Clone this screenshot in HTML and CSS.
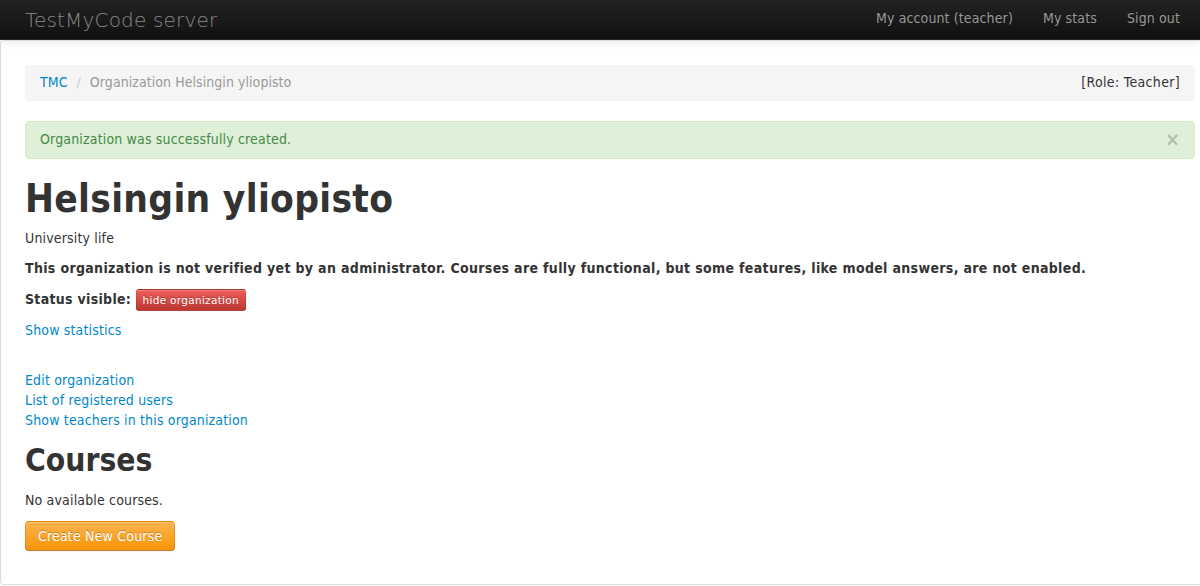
FILE: index.html
```html
<!DOCTYPE html>
<html>
<head>
<meta charset="utf-8">
<title>TestMyCode server</title>
<link rel="stylesheet" href="styles.css">
</head>
<body>
<header class="navbar">
  <a class="brand" href="#">TestMyCode server</a>
  <nav class="nav">
    <a href="#">My account (teacher)</a>
    <a href="#">My stats</a>
    <a href="#">Sign out</a>
  </nav>
</header>
<main class="wrapper">
  <div class="breadcrumb">
    <ul class="crumbs">
      <li><a href="#">TMC</a><span class="divider">/</span></li>
      <li class="active">Organization Helsingin yliopisto</li>
    </ul>
    <span class="role">[Role: Teacher]</span>
  </div>
  <div class="alert">
    <span>Organization was successfully created.</span>
    <button class="close" type="button">×</button>
  </div>
  <h1>Helsingin yliopisto</h1>
  <p>University life</p>
  <p class="notice"><strong>This organization is not verified yet by an administrator. Courses are fully functional, but some features, like model answers, are not enabled.</strong></p>
  <p class="status"><strong>Status visible:</strong> <button class="btn btn-mini btn-danger" type="button">hide organization</button></p>
  <p class="stats"><a href="#">Show statistics</a></p>
  <div class="links">
    <a href="#">Edit organization</a>
    <a href="#">List of registered users</a>
    <a href="#">Show teachers in this organization</a>
  </div>
  <h2>Courses</h2>
  <p>No available courses.</p>
  <button class="btn btn-warning" type="button">Create New Course</button>
</main>
</body>
</html>
```
FILE: styles.css
```css
* { box-sizing: border-box; }
html, body { margin: 0; padding: 0; }
body {
  font-family: "DejaVu Sans Condensed", "DejaVu Sans", sans-serif;
  font-stretch: condensed;
  font-size: 14px;
  line-height: 20px;
  letter-spacing: 0.16px;
  color: #333;
  background: #fff;
  overflow: hidden;
}
a { color: #0088cc; text-decoration: none; }

.navbar {
  height: 40px;
  display: flex;
  align-items: center;
  justify-content: space-between;
  background: linear-gradient(to bottom, #222222, #111111);
  border-bottom: 1px solid #252525;
  box-shadow: 0 1px 10px rgba(0,0,0,0.1);
  padding: 0 5px 0 25px;
  position: relative;
  z-index: 2;
}
.brand {
  font-family: "DejaVu Sans", sans-serif;
  font-stretch: normal;
  color: #8a8a8a;
  font-size: 20px;
  font-weight: 200;
  line-height: 20px;
  letter-spacing: 0.18px;
  padding: 10px 0;
}
.nav { display: flex; }
.nav a {
  color: #999;
  padding: 8px 15px 12px;
  letter-spacing: 0.12px;
  text-shadow: 0 -1px 0 rgba(0,0,0,0.25);
}

.wrapper {
  border-left: 1px solid #dcdcdc;
  border-bottom: 1px solid #dcdcdc;
  border-top: 1px solid #e6e6e6;
  border-radius: 4px 0 0 4px;
  padding: 24px 5px 31px 24px;
  min-height: 545px;
}

.breadcrumb {
  display: flex;
  justify-content: space-between;
  background: #f5f5f5;
  border-radius: 4px;
  padding: 7px 15px 9px;
  margin-bottom: 20px;
}
.crumbs { list-style: none; margin: 0; padding: 0; display: flex; letter-spacing: 0.06px; }
.crumbs .divider { color: #ccc; padding: 0 9px 0 9px; }
.crumbs .active { color: #999; }
.role { color: #333; letter-spacing: 0.33px; }

.alert {
  display: flex;
  justify-content: space-between;
  background: #dff0d8;
  border: 1px solid #d6e9c6;
  color: #468847;
  border-radius: 4px;
  padding: 7px 14px 9px 14px;
  margin-bottom: 20px;
}
.close {
  background: none;
  border: 0;
  padding: 0;
  font-family: inherit;
  font-size: 20px;
  font-weight: bold;
  line-height: 20px;
  color: #000;
  opacity: 0.2;
  margin: 0;
}

h1 {
  font-size: 38.5px;
  line-height: 40px;
  font-weight: bold;
  letter-spacing: 0.3px;
  margin: 20px 0 9px;
}
h2 {
  font-size: 31.5px;
  line-height: 40px;
  font-weight: bold;
  letter-spacing: 0;
  margin: 10px 0 10px;
}
p { margin: 0 0 10px; }
.notice { letter-spacing: 0.33px; }
.status { line-height: 22px; margin-bottom: 9px; letter-spacing: 0.3px; }
.stats { margin-bottom: 30px; }
.links { display: flex; flex-direction: column; align-items: flex-start; }

.btn {
  display: inline-block;
  font-family: inherit;
  font-stretch: condensed;
  color: #fff;
  text-shadow: 0 -1px 0 rgba(0,0,0,0.25);
  border: 1px solid rgba(0,0,0,0.1);
  border-bottom-color: rgba(0,0,0,0.25);
  border-radius: 4px;
  box-shadow: inset 0 1px 0 rgba(255,255,255,0.2), 0 1px 2px rgba(0,0,0,0.05);
  cursor: pointer;
  vertical-align: middle;
}
.btn-mini {
  font-family: "DejaVu Sans", sans-serif;
  font-stretch: normal;
  font-size: 10.5px;
  line-height: 20px;
  letter-spacing: 0.3px;
  padding: 0 6px;
  border-radius: 3px;
  vertical-align: baseline;
}
.btn-danger { background: linear-gradient(to bottom, #ee5f5b, #bd362f); }
.btn-warning {
  background: linear-gradient(to bottom, #fbb450, #f89406);
  font-size: 14px;
  line-height: 20px;
  letter-spacing: 0.18px;
  padding: 4px 12px 4px;
  margin-top: 1px;
}
```
